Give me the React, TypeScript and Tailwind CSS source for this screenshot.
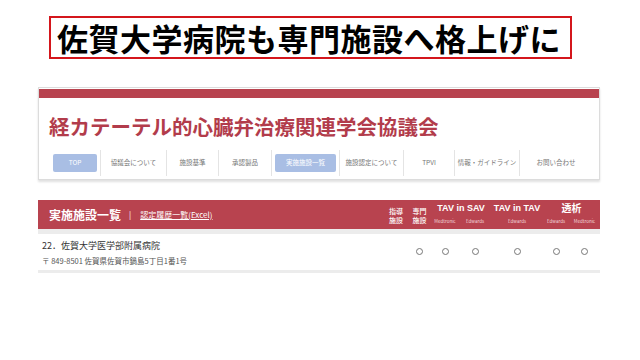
const navItems = [
    { label: "TOP", width: 51, active: true },
    { label: "協議会について", width: 66 },
    { label: "施設基準", width: 52 },
    { label: "承認製品", width: 53 },
    { label: "実施施設一覧", width: 68, active: true },
    { label: "施設認定について", width: 64 },
    { label: "TPVI", width: 51 },
    { label: "情報・ガイドライン", width: 65 },
    { label: "お問い合わせ", width: 72 },
];

const marks = [false, true, true, true, true, true, true];

const jp = { fontFamily: '"Noto Sans CJK JP", "Noto Sans", sans-serif' };

export default function App() {
    return (
        <div className="w-[640px] h-[360px] bg-white overflow-hidden" style={jp}>
            <div className="ml-[49px] mt-[16px] w-[523px] h-[43px] border-2 border-[#d4161c] flex items-center pl-[6px]">
                <span className="text-[31px] font-bold leading-none tracking-[0.5px] text-black">佐賀大学病院も専門施設へ格上げに</span>
            </div>

            <div className="ml-[38px] mt-[28px] w-[562px] border border-[#dcdcdc] shadow-[0_2px_2px_rgba(0,0,0,0.12)]">
                <div className="h-[9px] mt-[1px] bg-[#b8434f]" />
                <div className="pl-[10px] pt-[14px] h-[52px]">
                    <span className="text-[20.5px] font-bold leading-[28px] text-[#b23c4b]">経カテーテル的心臓弁治療関連学会協議会</span>
                </div>
                <div className="flex pl-[11px] h-[29px] pb-[3px]">
                    {navItems.map((item, i) => (
                        <div
                            key={item.label}
                            className={`flex items-center justify-center ${i < navItems.length - 1 ? "border-r border-[#e4e4e4]" : ""}`}
                            style={{ width: item.width }}
                        >
                            {item.active ? (
                                <div className="w-[calc(100%-6px)] h-[18px] rounded-[2px] bg-[#a9bee4] flex items-center justify-center text-[6.5px] text-white">{item.label}</div>
                            ) : (
                                <span className="text-[6.5px] text-[#777]">{item.label}</span>
                            )}
                        </div>
                    ))}
                </div>
            </div>

            <div className="ml-[38px] mt-[20px] w-[562px]">
                <div className="h-[29px] bg-[#b8434f] flex">
                    <div className="flex-1 flex items-center pl-[11px] text-white">
                        <span className="text-[12px] font-bold leading-none">実施施設一覧</span>
                        <span className="ml-[8px] text-[8px] leading-none">|</span>
                        <span className="ml-[9px] text-[8px] underline leading-none">認定履歴一覧(Excel)</span>
                    </div>
                    <div className="grid grid-cols-[24px_23px_28px_32px_52px_26px_31px] grid-rows-[17px_12px] text-white text-center">
                        <div className="row-span-2 text-[7px] leading-[9px] font-medium pt-[7px]">指導<br />施設</div>
                        <div className="row-span-2 text-[7px] leading-[9px] font-medium pt-[7px]">専門<br />施設</div>
                        <div className="col-span-2 text-[9px] font-bold leading-none pt-[4px]" style={{ fontFamily: '"Liberation Sans", "Noto Sans CJK JP", sans-serif' }}>TAV in SAV</div>
                        <div className="text-[9px] font-bold leading-none pt-[4px]" style={{ fontFamily: '"Liberation Sans", "Noto Sans CJK JP", sans-serif' }}>TAV in TAV</div>
                        <div className="col-span-2 text-[10px] font-bold leading-none pt-[3px]">透析</div>
                        <div className="text-[4.5px] leading-none pt-[2px] text-[#f1d6da]">Medtronic</div>
                        <div className="text-[4.5px] leading-none pt-[2px] text-[#f1d6da]">Edwards</div>
                        <div className="text-[4.5px] leading-none pt-[2px] text-[#f1d6da]">Edwards</div>
                        <div className="text-[4.5px] leading-none pt-[2px] text-[#f1d6da]">Edwards</div>
                        <div className="text-[4.5px] leading-none pt-[2px] text-[#f1d6da]">Medtronic</div>
                    </div>
                </div>
                <div className="h-[5px] bg-[#ececec]" />
                <div className="flex h-[36px]">
                    <div className="flex-1 pl-[4px]">
                        <div className="text-[9px] leading-none mt-[7px] text-[#333]">22．佐賀大学医学部附属病院</div>
                        <div className="text-[7.5px] leading-none mt-[7px] text-[#555]">〒 849-8501 佐賀県佐賀市鍋島5丁目1番1号</div>
                    </div>
                    <div className="grid grid-cols-[24px_23px_28px_32px_52px_26px_31px] items-center pb-[2px]">
                        {marks.map((m, i) => (
                            <div key={i} className="flex justify-center">
                                {m && <div className="w-[7px] h-[7px] rounded-full border border-[#777]" />}
                            </div>
                        ))}
                    </div>
                </div>
                <div className="h-[3px] bg-[#ececec]" />
            </div>
        </div>
    );
}
